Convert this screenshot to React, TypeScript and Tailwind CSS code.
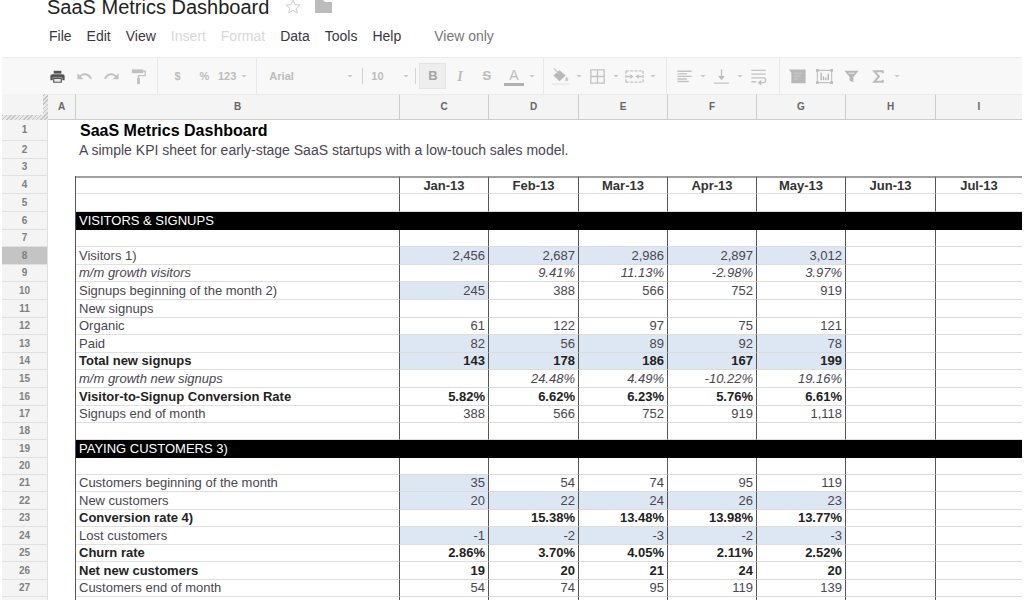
import type { ReactNode } from "react";
import clsx from "clsx";

type Row = {
  n: number;
  label?: string;
  style?: "bold" | "italic" | "section";
  values?: string[];
  // how many month cells, from the left, are input cells
  inputs?: number;
  tall?: boolean;
};

const columns = ["A", "B", "C", "D", "E", "F", "G", "H", "I"];
const months = ["Jan-13", "Feb-13", "Mar-13", "Apr-13", "May-13", "Jun-13", "Jul-13"];

const rows: Row[] = [
  { n: 5, tall: true },
  { n: 6, tall: true, label: "VISITORS & SIGNUPS", style: "section" },
  { n: 7 },
  { n: 8, tall: true, label: "Visitors 1)", values: ["2,456", "2,687", "2,986", "2,897", "3,012"], inputs: 5 },
  { n: 9, label: "m/m growth visitors", style: "italic", values: ["", "9.41%", "11.13%", "-2.98%", "3.97%"] },
  { n: 10, tall: true, label: "Signups beginning of the month 2)", values: ["245", "388", "566", "752", "919"], inputs: 1 },
  { n: 11, tall: true, label: "New signups" },
  { n: 12, label: "Organic", values: ["61", "122", "97", "75", "121"] },
  { n: 13, tall: true, label: "Paid", values: ["82", "56", "89", "92", "78"], inputs: 5 },
  { n: 14, label: "Total new signups", style: "bold", values: ["143", "178", "186", "167", "199"], inputs: 5 },
  { n: 15, tall: true, label: "m/m growth new signups", style: "italic", values: ["", "24.48%", "4.49%", "-10.22%", "19.16%"] },
  { n: 16, tall: true, label: "Visitor-to-Signup Conversion Rate", style: "bold", values: ["5.82%", "6.62%", "6.23%", "5.76%", "6.61%"] },
  { n: 17, label: "Signups end of month", values: ["388", "566", "752", "919", "1,118"] },
  { n: 18 },
  { n: 19, tall: true, label: "PAYING CUSTOMERS 3)", style: "section" },
  { n: 20 },
  { n: 21, label: "Customers beginning of the month", values: ["35", "54", "74", "95", "119"], inputs: 1 },
  { n: 22, tall: true, label: "New customers", values: ["20", "22", "24", "26", "23"], inputs: 5 },
  { n: 23, label: "Conversion rate 4)", style: "bold", values: ["", "15.38%", "13.48%", "13.98%", "13.77%"] },
  { n: 24, tall: true, label: "Lost customers", values: ["-1", "-2", "-3", "-2", "-3"], inputs: 5 },
  { n: 25, label: "Churn rate", style: "bold", values: ["2.86%", "3.70%", "4.05%", "2.11%", "2.52%"] },
  { n: 26, tall: true, label: "Net new customers", style: "bold", values: ["19", "20", "21", "24", "20"] },
  { n: 27, label: "Customers end of month", values: ["54", "74", "95", "119", "139"] },
];

function Caret() {
  return (
    <svg width="10" height="10" viewBox="0 0 10 10" className="shrink-0" aria-hidden="true">
      <path d="M2.5 4h5L5 6.5z" fill="#c8c8c8" />
    </svg>
  );
}

function Divider() {
  return <span className="h-full w-px shrink-0 bg-[#e8e8e8]" />;
}

function ShortDivider() {
  return <span className="h-4 w-px shrink-0 bg-[#d4d4d4]" />;
}

function Tool({ name, active, menu, children }: { name: string; active?: boolean; menu?: boolean; children: ReactNode }) {
  return (
    <button type="button" aria-label={name} className="flex shrink-0 items-center">
      <span
        className={clsx(
          "flex h-[26px] w-[27px] items-center justify-center",
          active && "border border-[#e4e4e4] bg-[#eeeeee]"
        )}
      >
        {children}
      </span>
      {menu && <Caret />}
    </button>
  );
}

function Icon({ children }: { children: ReactNode }) {
  return (
    <svg width="19" height="19" viewBox="0 0 20 20" fill="none" stroke="#c2c2c2" strokeWidth="1.4" aria-hidden="true">
      {children}
    </svg>
  );
}

function Toolbar() {
  return (
    <div className="mx-[2px] flex h-[37px] shrink-0 items-center border-t border-[#ececec] bg-[#f8f8f8] pl-[42px] text-[11px] font-bold text-[#bcbcbc]">
      <Tool name="Print">
        <Icon>
          <path d="M6 4h8v3H6z" fill="#555" stroke="none" />
          <path d="M4.5 7.5h11a2 2 0 0 1 2 2v4.500H15v-3H5v3H2.500V9.500a2 2 0 0 1 2-2z" fill="#555" stroke="none" />
          <path d="M6 12h8v4H6z" fill="#e8e8e8" stroke="#555" strokeWidth="1.200" />
        </Icon>
      </Tool>
      <Tool name="Undo">
        <Icon>
          <path d="M5 10c3-3.500 9-3.500 12 2.500" strokeWidth="2" />
          <path d="M2.500 6.500v6.500h6.500z" fill="#c2c2c2" stroke="none" />
        </Icon>
      </Tool>
      <Tool name="Redo">
        <Icon>
          <path d="M15 10c-3-3.500-9-3.500-12 2.500" strokeWidth="2" />
          <path d="M17.500 6.500v6.500h-6.500z" fill="#c2c2c2" stroke="none" />
        </Icon>
      </Tool>
      <Tool name="Paint format">
        <Icon>
          <path d="M3 2.500h12v4H3z" fill="#c0c0c0" stroke="none" />
          <path d="M15 4.500h2v4.500h-7v3" />
          <path d="M8.500 11.500h3V18h-3z" fill="#c0c0c0" stroke="none" />
        </Icon>
      </Tool>
      <span className="w-[5px]" />
      <Divider />
      <span className="w-[6px]" />
      <Tool name="Format as currency">$</Tool>
      <Tool name="Format as percent">%</Tool>
      <button type="button" className="flex items-center">
        123
        <span className="w-[3px]" />
        <Caret />
      </button>
      <span className="w-[7px]" />
      <Divider />
      <label className="flex w-[98px] shrink-0 items-center pl-3">
        <select aria-label="Font" className="min-w-0 flex-1 appearance-none bg-transparent">
          <option>Arial</option>
        </select>
        <Caret />
      </label>
      <span className="w-[7px]" />
      <ShortDivider />
      <label className="flex w-[48px] shrink-0 items-center pl-2">
        <select aria-label="Font size" className="min-w-0 flex-1 appearance-none bg-transparent">
          <option>10</option>
        </select>
        <Caret />
      </label>
      <span className="w-[4px]" />
      <ShortDivider />
      <span className="w-[3px]" />
      <Tool name="Bold" active>
        <span className="text-[13px] text-[#a4a4a4]">B</span>
      </Tool>
      <Tool name="Italic">
        <span className="font-['Liberation_Serif'] text-[14px] italic">I</span>
      </Tool>
      <Tool name="Strikethrough">
        <span className="text-[13px] line-through">S</span>
      </Tool>
      <Tool name="Text colour" menu>
        <span className="border-b-[3px] border-[#b0b0b0] px-[5px] text-[14px] leading-[16px] font-normal">A</span>
      </Tool>
      <span className="w-[6px]" />
      <Divider />
      <span className="w-[3px]" />
      <Tool name="Fill colour" menu>
        <Icon>
          <path d="M9 3.500l6.500 5.500-6.500 6L2.500 9z" fill="#b8b8b8" stroke="none" />
          <path d="M3 1.500l6 6" strokeWidth="1.200" />
          <path d="M16.500 10c1.200 1.700 1.700 2.500 1.700 3.300a1.600 1.600 0 0 1-3.300 0c0-.8.500-1.600 1.600-3.300z" fill="#cccccc" stroke="none" />
          <path d="M1 18h18" stroke="#ececec" strokeWidth="2" />
        </Icon>
      </Tool>
      <Tool name="Borders" menu>
        <Icon>
          <path d="M3 3h14v14H3zM10 3v14M3 10h14" />
        </Icon>
      </Tool>
      <Tool name="Merge cells" menu>
        <Icon>
          <path d="M1 4h18M1 16h18M1 4v12M19 4v12" strokeDasharray="3 1.500" />
          <path d="M2 10h4M18 10h-4" />
          <path d="M5.500 7.500L9 10l-3.500 2.500zM14.500 7.500L11 10l3.500 2.500z" fill="#c2c2c2" stroke="none" />
        </Icon>
      </Tool>
      <span className="w-[8px]" />
      <Divider />
      <span className="w-[4px]" />
      <Tool name="Horizontal align" menu>
        <Icon>
          <path d="M2.500 4.500h15M2.500 7.200h10M2.500 9.900h15M2.500 12.600h10M2.500 15.300h12" />
        </Icon>
      </Tool>
      <Tool name="Vertical align" menu>
        <Icon>
          <path d="M10 2.500v8M2 17h16" />
          <path d="M6.500 9.500h7L10 14z" fill="#bababa" stroke="none" />
        </Icon>
      </Tool>
      <Tool name="Wrap text">
        <Icon>
          <path d="M2.500 3.500h15M2.500 7.500h15M2.500 11.500h12.500a2.500 2.500 0 0 1 0 5h-3M2.500 15.500h5" />
          <path d="M13 13.500v6l-4-3z" fill="#c2c2c2" stroke="none" />
        </Icon>
      </Tool>
      <span className="w-[7px]" />
      <Divider />
      <span className="w-[4px]" />
      <Tool name="Insert comment">
        <Icon>
          <path d="M1 2.500h17.500V17H3.500V6z" fill="#b8b8b8" stroke="none" />
          <path d="M6.500 6.500h9M6.500 9.500h7M6.500 12.500h4" stroke="#cccccc" strokeWidth="1" />
        </Icon>
      </Tool>
      <Tool name="Insert chart">
        <Icon>
          <path d="M2.500 3.500h15v13h-15z" strokeWidth="1.200" />
          <path d="M1 2h3v3H1zM16 2h3v3h-3zM1 15h3v3H1zM16 15h3v3h-3z" fill="#bcbcbc" stroke="none" />
          <path d="M6.500 6v8M9 10v4M11.500 11v3M14 7v7" stroke="#b4b4b4" />
        </Icon>
      </Tool>
      <Tool name="Filter">
        <Icon>
          <path d="M2.500 4h15L12 10.500V16l-4-1.500v-4z" fill="#b8b8b8" stroke="none" />
          <path d="M7 6.500h6" stroke="#f0f0f0" strokeWidth="1" />
        </Icon>
      </Tool>
      <Tool name="Functions" menu>
        <Icon>
          <path d="M14.500 6.500V4.500H5.500l5 5.500-5 5.500h9v-2" strokeWidth="2" stroke="#bababa" />
        </Icon>
      </Tool>
    </div>
  );
}

function RowHead({ n, selected }: { n: number; selected?: boolean }) {
  return (
    <th
      scope="row"
      className={clsx(
        "border-r border-b border-[#e0e0e0] p-0 text-[10px] leading-[14px] font-bold text-[#808080]",
        selected ? "bg-[#c4c4c4]" : "bg-[#f4f4f4]"
      )}
    >
      {n}
    </th>
  );
}

function SheetRow({ row }: { row: Row }) {
  const height = row.tall ? "h-[18px]" : "h-[17px]";

  if (row.style === "section") {
    return (
      <tr className={height}>
        <RowHead n={row.n} />
        <td className="border-r border-[#555] p-0" />
        <td colSpan={8} className="bg-black py-0 pr-0 pl-[3px] text-white">
          {row.label}
        </td>
      </tr>
    );
  }

  const text = clsx(
    row.style === "bold" && "font-bold text-[#222]",
    row.style === "italic" && "italic"
  );

  return (
    <tr className={height}>
      <RowHead n={row.n} selected={row.n === 8} />
      <td className="border-r border-[#555] p-0" />
      <td className={clsx("border-r border-b border-r-[#555] border-b-[#e0e0e0] py-0 pr-0 pl-[3px]", text)}>{row.label}</td>
      {months.map((month, i) => (
        <td
          key={month}
          className={clsx(
            "border-b border-b-[#dcdcdc] py-0 pr-[3px] pl-0 text-right",
            i < months.length - 1 && "border-r border-r-[#555]",
            i < (row.inputs ?? 0) && "bg-[#dde6f3]",
            text
          )}
        >
          {row.values?.[i]}
        </td>
      ))}
    </tr>
  );
}

export default function App() {
  return (
    <div className="flex h-screen flex-col overflow-hidden bg-white font-['Liberation_Sans',Arial,sans-serif] text-[#4a4650]">
      <header className="shrink-0 pb-[11px] pl-[47px]">
        <div className="flex h-[26px] items-start">
          <h1 className="mr-4 text-[20px] leading-[14px] text-[#222]">SaaS Metrics Dashboard</h1>
          <button type="button" aria-label="Star" className="mr-[14px]">
            <svg width="16" height="14" viewBox="0 0 16 14" fill="none" stroke="#d0d0d0">
              <path d="M8 0l2 4.600 5 .4-3.800 3.300L12.400 13 8 10.400 3.600 13l1.200-4.700L1 5l5-.4z" />
            </svg>
          </button>
          <button type="button" aria-label="Move to folder">
            <svg width="17" height="13" viewBox="0 0 17 13" fill="#bcbcbc">
              <path d="M0 0h8l2 2h7v11H0z" />
            </svg>
          </button>
        </div>
        <nav className="flex h-5 items-center gap-[15px] pl-[2px] text-[14px] text-[#3c3545]">
          <button type="button">File</button>
          <button type="button">Edit</button>
          <button type="button">View</button>
          <button type="button" className="text-[#d8d8d8]">Insert</button>
          <button type="button" className="text-[#d8d8d8]">Format</button>
          <button type="button">Data</button>
          <button type="button">Tools</button>
          <button type="button">Help</button>
          <span className="pl-[18px] text-[#777]">View only</span>
        </nav>
      </header>

      <Toolbar />

      <main className="flex min-h-0 flex-1 flex-col overflow-hidden px-[2px]">
        <table className="w-full table-fixed border-separate border-spacing-0 text-[13px] leading-[16px] whitespace-nowrap">
          <colgroup>
            <col className="w-[46px]" />
            <col className="w-[28px]" />
            <col className="w-[324px]" />
            <col className="w-[89px]" />
            <col className="w-[90px]" />
            <col className="w-[89px]" />
            <col className="w-[89px]" />
            <col className="w-[89px]" />
            <col className="w-[90px]" />
            <col />
          </colgroup>
          <thead>
            <tr className="h-[26px]">
              <td className="bg-[#f4f4f4] p-0">
                <div className="h-[26px] border-r-[5px] border-b-[5px] border-transparent bg-[repeating-linear-gradient(135deg,#c4c4c4_0_1px,#e8e8e8_1px_3px)] bg-origin-border">
                  <div className="h-full bg-[#f4f4f4]" />
                </div>
              </td>
              {columns.map((c) => (
                <th
                  key={c}
                  scope="col"
                  className="border-t border-r border-b border-t-[#ececec] border-r-[#cccccc] border-b-[#cccccc] bg-[#f4f4f4] p-0 text-[10px] text-[#666] last:border-r-0"
                >
                  {c}
                </th>
              ))}
            </tr>
          </thead>
          <tbody>
            <tr className="h-[21px]">
              <RowHead n={1} />
              <td className="p-0" />
              <td colSpan={8} className="py-0 pr-0 pl-1 text-[16px] font-bold text-black">
                SaaS Metrics Dashboard
              </td>
            </tr>
            <tr className="h-[18px]">
              <RowHead n={2} />
              <td className="p-0" />
              <td colSpan={8} className="py-0 pr-0 pl-[3px] text-[14px]">
                A simple KPI sheet for early-stage SaaS startups with a low-touch sales model.
              </td>
            </tr>
            <tr className="h-[17px]">
              <RowHead n={3} />
              <td className="p-0" />
              <td colSpan={8} className="p-0" />
            </tr>
            <tr className="h-[18px]">
              <RowHead n={4} />
              <td className="border-r border-[#555] p-0" />
              <td className="border-t-2 border-r border-b border-t-[#a0a0a0] border-r-[#555] border-b-[#e0e0e0] p-0" />
              {months.map((month) => (
                <th
                  key={month}
                  scope="col"
                  className="border-t-2 border-r border-b border-t-[#a0a0a0] border-r-[#555] border-b-[#e0e0e0] p-0 leading-[15px] text-[#333] last:border-r-0"
                >
                  {month}
                </th>
              ))}
            </tr>
            {rows.map((row) => (
              <SheetRow key={row.n} row={row} />
            ))}
            <tr className="h-[17px]">
              <td className="border-r border-[#e0e0e0] bg-[#f4f4f4] p-0" />
              <td className="border-r border-[#555] p-0" />
              <td className="border-r border-[#555] p-0" />
              {months.map((month) => (
                <td key={month} className="border-r border-[#555] p-0 last:border-r-0" />
              ))}
            </tr>
          </tbody>
        </table>
      </main>
    </div>
  );
}
